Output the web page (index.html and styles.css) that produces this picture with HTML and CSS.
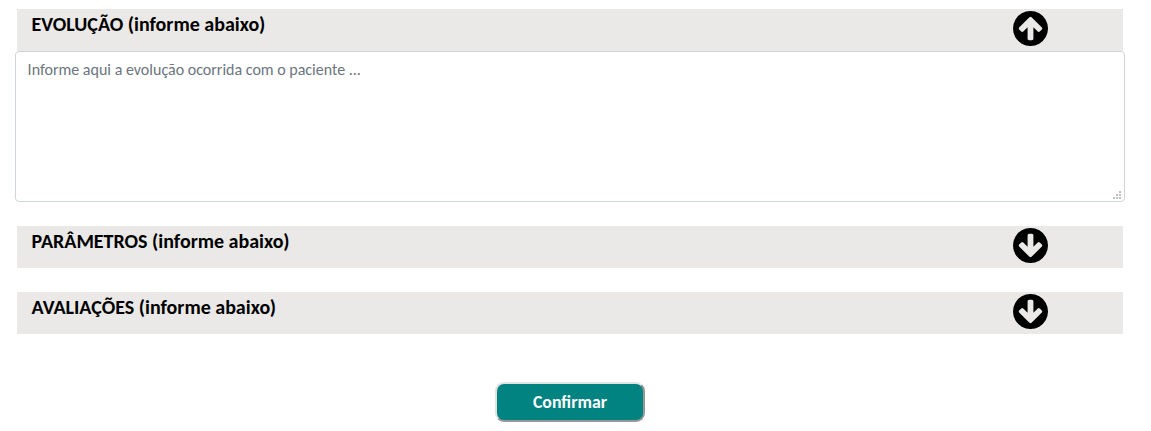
FILE: index.html
```html
<!DOCTYPE html>
<html lang="pt-BR">
<head>
<meta charset="utf-8">
<title>Evolução</title>
<link rel="stylesheet" href="styles.css">
</head>
<body>
<form class="form">
  <section class="section">
    <header class="bar">
      <h2 class="title">EVOLUÇÃO (informe abaixo)</h2>
      <svg class="arrow arrow-up" viewBox="128 128 1536 1536"><use href="#arrow-down"/></svg>
    </header>
    <div class="field">
      <textarea class="notes" placeholder="Informe aqui a evolução ocorrida com o paciente ..."></textarea>
      <svg class="grip" viewBox="0 0 8 8"><path d="M6 0h2v2H6zM3 3h2v2H3zM6 3h2v2H6zM0 6h2v2H0zM3 6h2v2H3zM6 6h2v2H6z"/></svg>
    </div>
  </section>
  <section class="section">
    <header class="bar">
      <h2 class="title">PARÂMETROS (informe abaixo)</h2>
      <svg class="arrow" viewBox="128 128 1536 1536"><use href="#arrow-down"/></svg>
    </header>
  </section>
  <section class="section">
    <header class="bar">
      <h2 class="title">AVALIAÇÕES (informe abaixo)</h2>
      <svg class="arrow" viewBox="128 128 1536 1536"><use href="#arrow-down"/></svg>
    </header>
  </section>
  <button class="confirm" type="button">Confirmar</button>
</form>
<svg width="0" height="0" class="symbols">
  <defs><path id="arrow-down" d="M1412 897q0-27-18-45l-91-91q-18-18-45-18t-45 18l-189 189v-502q0-26-19-45t-45-19h-128q-26 0-45 19t-19 45v502l-189-189q-19-19-45-19t-45 19l-91 91q-18 18-18 45t18 45l362 362 91 91q18 18 45 18t45-18l91-91 362-362q18-18 18-45zm252-1q0 209-103 385.500t-279.500 279.500-385.500 103-385.500-103-279.500-279.500-103-385.500 103-385.500 279.500-279.500 385.500-103 385.500 103 279.500 279.500 103 385.500z"/></defs>
</svg>
</body>
</html>
```
FILE: styles.css
```css
* { box-sizing: border-box; }
body {
  margin: 0;
  background: #fff;
  font-family: Carlito, Calibri, "Open Sans", "Noto Sans", sans-serif;
}
.form {
  display: flex;
  flex-direction: column;
  padding: 9px 26px 0 15px;
}
.section { margin-bottom: 24px; }
.bar {
  display: flex;
  align-items: flex-start;
  justify-content: space-between;
  height: 42px;
  margin: 0 2px;
  padding: 2px 75px 0 14.6px;
  background: #eae9e7;
}
.title {
  margin: 0;
  font-size: 20px;
  line-height: 27px;
  font-weight: 700;
  color: #000;
}
.arrow { width: 35px; height: 35px; }
.arrow-up { transform: rotate(180deg); }
.field { position: relative; }
.notes {
  display: block;
  width: 100%;
  height: 151px;
  padding: 6px 11.6px;
  border: 1px solid #ced4da;
  border-radius: 4px;
  font: 16px/24px Carlito, Calibri, "Open Sans", "Noto Sans", sans-serif;
  resize: none;
}
.notes::placeholder { color: #6c757d; opacity: 1; }
.grip {
  position: absolute;
  right: 4px;
  bottom: 3px;
  width: 8px;
  height: 8px;
  fill: #bfbfbf;
}
.confirm {
  align-self: center;
  width: 150px;
  height: 40px;
  margin: 24px 0 0;
  padding: 0;
  border: 2px solid;
  border-color: #e3e3e3 #979797 #979797 #e3e3e3;
  border-radius: 9px;
  background: #008381;
  color: #fff;
  font: 700 17.8px Carlito, Calibri, "Open Sans", "Noto Sans", sans-serif;
}
.symbols { display: block; }
```
